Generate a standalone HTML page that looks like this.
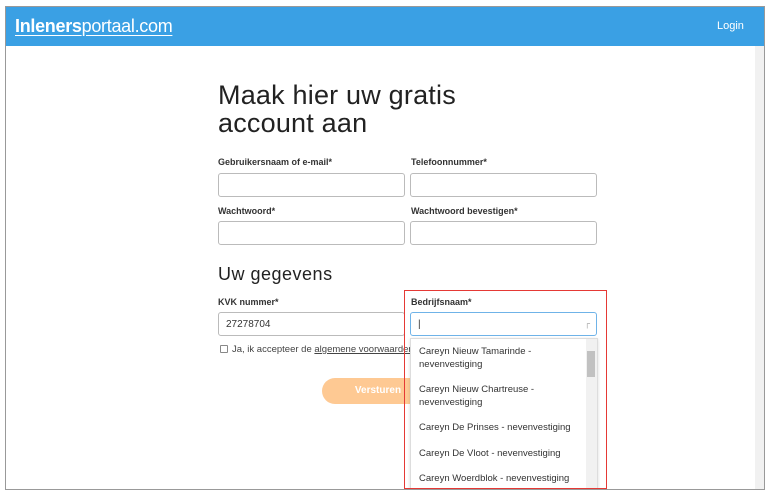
<!DOCTYPE html>
<html><head><style>
*{box-sizing:border-box;margin:0;padding:0}
body{width:772px;height:495px;background:#fff;position:relative;overflow:hidden;font-family:"Liberation Sans",sans-serif;color:#333}
.frame{position:absolute;left:5px;top:6px;width:760px;height:484px;border:1px solid #999;overflow:hidden;background:#fff}
.hdr{position:absolute;left:0;top:0;width:758px;height:39px;background:#3aa0e4}
.logo{position:absolute;left:9px;top:9px;color:#fff;font-size:18px;text-decoration:underline;text-underline-offset:3px;letter-spacing:-0.3px}
.logo b{font-weight:bold}
.login{position:absolute;left:711px;top:13px;color:#fff;font-size:11px}
.sb{position:absolute;left:749px;top:39px;width:9px;height:445px;background:#f1f1f1}
.abs{position:absolute}
h1{position:absolute;left:212px;top:74px;font-size:27px;font-weight:normal;line-height:28px;color:#222;letter-spacing:0.2px}
h2{position:absolute;left:212px;top:257px;font-size:18px;font-weight:normal;color:#222;letter-spacing:0.5px}
.lbl{position:absolute;font-size:9px;font-weight:bold;color:#333}
.inp{position:absolute;width:187px;height:24px;border:1px solid #bbb;border-radius:3px;background:#fff;font-size:10px;padding:6px 7px}
.btn{position:absolute;left:316px;top:371px;width:112px;height:26px;background:#fec993;border-radius:13px;color:#fff;font-weight:bold;font-size:10px;text-align:center;line-height:26px}
.red{position:absolute;left:398px;top:283px;width:203px;height:199px;border:1.5px solid #e53935}
.dd{position:absolute;left:404px;top:331px;width:188px;height:153px;background:#fff;border:1px solid #ddd;box-shadow:0 1px 3px rgba(0,0,0,.15);overflow:hidden}
.dd div.it{position:absolute;left:8px;font-size:9.5px;color:#333;line-height:13px}
</style></head><body>
<div class="frame">
<div class="hdr"><div class="logo"><b>Inleners</b>portaal.com</div><div class="login">Login</div></div>
<div class="sb"></div>
<h1>Maak hier uw gratis<br>account aan</h1>
<div class="lbl" style="left:212px;top:150px">Gebruikersnaam of e-mail*</div>
<div class="lbl" style="left:405px;top:150px">Telefoonnummer*</div>
<div class="inp" style="left:212px;top:166px"></div>
<div class="inp" style="left:404px;top:166px"></div>
<div class="lbl" style="left:212px;top:199px">Wachtwoord*</div>
<div class="lbl" style="left:405px;top:199px">Wachtwoord bevestigen*</div>
<div class="inp" style="left:212px;top:214px"></div>
<div class="inp" style="left:404px;top:214px"></div>
<h2>Uw gegevens</h2>
<div class="lbl" style="left:212px;top:290px">KVK nummer*</div>
<div class="lbl" style="left:405px;top:290px">Bedrijfsnaam*</div>
<div class="inp" style="left:212px;top:305px;color:#333">27278704</div>
<div class="inp" style="left:404px;top:305px;border-color:#6fb3e8;color:#333">|<span style="position:absolute;right:6px;top:6px;color:#999;font-size:8px">&#x250C;</span></div>
<div class="abs" style="left:214px;top:338px;width:8px;height:8px;border:1px solid #888;border-radius:1px"></div>
<div class="abs" style="left:226px;top:337px;font-size:9.5px;color:#444;white-space:nowrap">Ja, ik accepteer de <u>algemene voorwaarden</u></div>
<div class="btn">Versturen</div>
<div class="dd">
<div class="abs" style="left:175px;top:0;width:11px;height:153px;background:#f1f1f1"></div>
<div class="abs" style="left:176px;top:12px;width:8px;height:26px;background:#c1c1c1"></div>
<div class="it" style="top:6px">Careyn Nieuw Tamarinde -<br>nevenvestiging</div>
<div class="it" style="top:44px">Careyn Nieuw Chartreuse -<br>nevenvestiging</div>
<div class="it" style="top:82px">Careyn De Prinses - nevenvestiging</div>
<div class="it" style="top:108px">Careyn De Vloot - nevenvestiging</div>
<div class="it" style="top:133px">Careyn Woerdblok - nevenvestiging</div>
</div>
<div class="red"></div>
</div>
</body></html>
